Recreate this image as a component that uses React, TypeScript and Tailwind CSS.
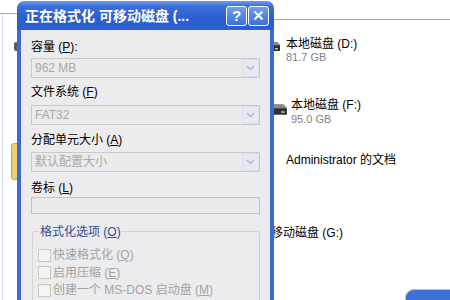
import React from 'react';

const sans = "font-['Liberation_Sans','Noto_Sans_CJK_SC',sans-serif]";

function Key({ k }: { k: string }) {
  return (
    <>
      (<span className="underline underline-offset-1">{k}</span>)
    </>
  );
}

function Combo({ value }: { value: string }) {
  return (
    <div className="h-[20px] w-[229px] border border-[#cac9c2] bg-[#ebebeb] flex items-center">
      <span className="flex-1 pl-[3px] text-[12px] leading-none text-[#a9a9a9]">{value}</span>
      <span className="w-[17px] h-[18px] bg-[#e6e9f1] border border-[#d9deea] rounded-[2px] flex items-center justify-center">
        <svg width="9" height="6" viewBox="0 0 9 6">
          <path d="M1 1l3.5 3.5L8 1" fill="none" stroke="#aebbd6" strokeWidth="1.6" />
        </svg>
      </span>
    </div>
  );
}

function Check({ children }: { children: React.ReactNode }) {
  return (
    <div className="flex items-center gap-[2px] h-[17.5px]">
      <span className="w-[13px] h-[13px] border border-[#c9c8bf] bg-[#f4f4f4]" />
      <span className="text-[12px] leading-none text-[#a3a3a3]">{children}</span>
    </div>
  );
}

function Drive() {
  return (
    <svg width="18" height="14" viewBox="0 0 18 14">
      <path d="M2 3h12l3 3v6H2z" fill="#4a4a4a" />
      <path d="M2 3h12l3 3H2z" fill="#8a8a8a" />
      <rect x="2" y="7" width="15" height="5" fill="#2f2f2f" />
      <rect x="12" y="9" width="3" height="1.5" fill="#9be07a" />
    </svg>
  );
}

export default function App() {
  return (
    <div className={`relative w-[450px] h-[300px] overflow-hidden bg-white ${sans}`}>
      {/* background explorer view */}
      <div className="absolute left-0 top-[13px] w-[17px] h-px bg-[#a8a8a8]" />
      <div className="absolute left-[2px] top-[14px] w-px h-[286px] bg-[#d5deee]" />
      <div className="absolute left-[14px] top-[42px] w-[6px] h-[9px] rounded-l-[2px] bg-[#5a5a5a]" />
      <div className="absolute left-[11px] top-[143px] w-[10px] h-[37px] rounded-[3px] bg-[#ecd070] border border-[#c9a743]" />
      <div className="absolute left-[273px] top-[19px] w-[177px] h-px bg-[#a8a8a8]" />

      <div className="absolute left-[263px] top-[39px]"><Drive /></div>
      <div className="absolute left-[286px] top-[37px] flex flex-col">
        <span className="text-[12px] leading-[14px] text-black">本地磁盘 (D:)</span>
        <span className="text-[11px] leading-[12px] text-[#808080]">81.7 GB</span>
      </div>

      <div className="absolute left-[269px] top-[102px] scale-110"><Drive /></div>
      <div className="absolute left-[291px] top-[98px] flex flex-col">
        <span className="text-[12px] leading-[14px] text-black">本地磁盘 (F:)</span>
        <span className="text-[11px] leading-[12px] text-[#808080] mt-px">95.0 GB</span>
      </div>

      <div className="absolute left-[286px] top-[153px] text-[12px] leading-[14px] text-black">
        Administrator 的文档
      </div>
      <div className="absolute left-[259px] top-[226px] text-[12px] leading-[14px] text-black">
        可移动磁盘 (G:)
      </div>

      <div className="absolute left-[405px] top-[289px] w-[50px] h-[20px] rounded-tl-[9px] bg-[#3e6fd4] border-t border-l border-[#a8c0ee]" />

      {/* dialog window */}
      <div className="absolute left-[17px] top-[1px] w-[257px] flex flex-col">
        <div className="h-[29px] rounded-t-[7px] bg-[linear-gradient(180deg,#6f9cec_0%,#3a6fd9_18%,#2a5ece_60%,#2c61d1_100%)] flex items-center pl-[8px] pr-[5px]">
          <span className="flex-1 text-white text-[14px] font-bold leading-none whitespace-nowrap">
            正在格式化 可移动磁盘 (...
          </span>
          <div className="flex gap-px">
            <span className="w-[21px] h-[20px] rounded-[3px] border border-white bg-[linear-gradient(180deg,#6f9df0,#3b70dc)] flex items-center justify-center text-white text-[15px] font-bold leading-none">
              ?
            </span>
            <span className="w-[21px] h-[20px] rounded-[3px] border border-white bg-[linear-gradient(180deg,#6f9df0,#3b70dc)] flex items-center justify-center">
              <svg width="11" height="11" viewBox="0 0 11 11">
                <path d="M1.5 1.5l8 8M9.5 1.5l-8 8" stroke="#fff" strokeWidth="2" />
              </svg>
            </span>
          </div>
        </div>

        <div className="h-[280px] border-x-[4px] border-[#3f6bd0] bg-[#ecebee] pl-[10px] pt-[10px] flex flex-col">
          <span className="text-[12px] leading-[14px] text-black">容量 <Key k="P" />:</span>
          <div className="mt-[4px]"><Combo value="962 MB" /></div>

          <span className="mt-[7px] text-[12px] leading-[14px] text-black">文件系统 <Key k="F" /></span>
          <div className="mt-[6px]"><Combo value="FAT32" /></div>

          <span className="mt-[8px] text-[12px] leading-[14px] text-black">分配单元大小 <Key k="A" /></span>
          <div className="mt-[5px]"><Combo value="默认配置大小" /></div>

          <span className="mt-[9px] text-[12px] leading-[14px] text-black">卷标 <Key k="L" /></span>
          <div className="mt-[2px] h-[20px] w-[229px] border border-[#c3c2bb] bg-[#ebebeb]" />

          <fieldset className="mt-[11px] ml-px w-[228px] border border-[#d6d4cb] rounded-[3px] pl-[5px] pb-[10px]">
            <legend className="ml-px px-px text-[12px] leading-[14px] text-[#344c94]">
              格式化选项 <Key k="O" />
            </legend>
            <div className="mt-[8px] flex flex-col">
              <Check>快速格式化 <Key k="Q" /></Check>
              <Check>启用压缩 <Key k="E" /></Check>
              <Check>创建一个 MS-DOS 启动盘 <Key k="M" /></Check>
            </div>
          </fieldset>
        </div>
      </div>
    </div>
  );
}
